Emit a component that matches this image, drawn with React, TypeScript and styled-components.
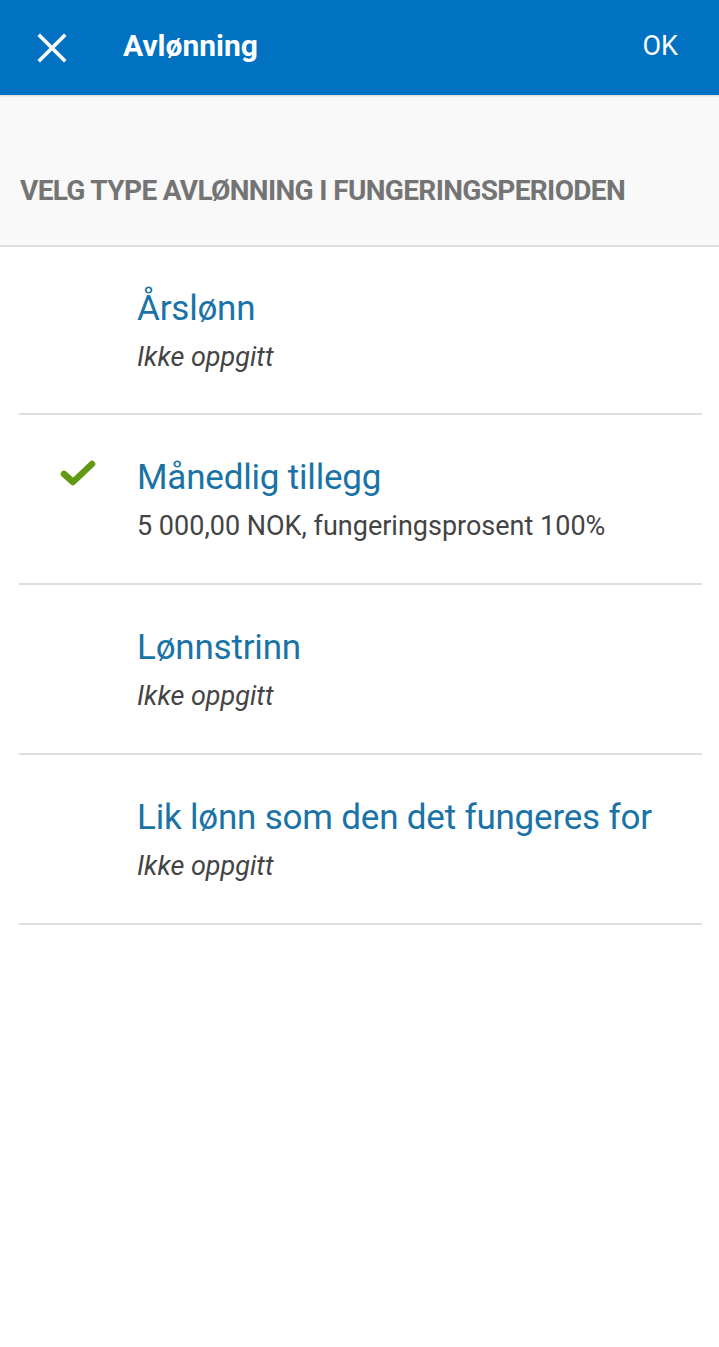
import React from "react";
import styled, { createGlobalStyle } from "styled-components";

const Global = createGlobalStyle`
  html, body { margin: 0; padding: 0; background: #ffffff; }
  body { font-family: Roboto, "Noto Sans", Arial, sans-serif; }
`;

const Page = styled.div`
  width: 719px;
  min-height: 1347px;
  background: #ffffff;
`;

const TopBar = styled.header`
  height: 95px;
  background: #0072c1;
  display: flex;
  align-items: center;
  padding: 0 41px 0 37px;
  box-sizing: border-box;
  box-shadow: 0 1px 2px rgba(0, 0, 0, 0.15);
  position: relative;
`;

const CloseButton = styled.button`
  width: 30px;
  height: 30px;
  padding: 0;
  border: 0;
  background: none;
  display: flex;
  align-items: center;
  justify-content: center;
  margin-right: 56px;
`;

const Title = styled.h1`
  flex: 1;
  margin: 0;
  color: #ffffff;
  font-family: Roboto, sans-serif;
  font-weight: 700;
  font-size: 30px;
  letter-spacing: 0;
  padding-bottom: 4px;
`;

const OkButton = styled.button`
  border: 0;
  background: none;
  color: #ffffff;
  font-family: Roboto, sans-serif;
  font-size: 27px;
  padding: 0 0 4px;
`;

const SectionHead = styled.div`
  background: #f9f9f9;
  height: 152px;
  border-bottom: 2px solid #dddddd;
  box-sizing: border-box;
  display: flex;
  align-items: flex-end;
  padding: 0 20px 38px;
`;

const SectionLabel = styled.h2`
  margin: 0;
  font-family: Roboto, sans-serif;
  font-weight: 700;
  font-size: 28px;
  line-height: 32px;
  color: #747474;
  text-transform: uppercase;
  letter-spacing: -0.65px;
  white-space: nowrap;
`;

const List = styled.ul`
  list-style: none;
  margin: 0;
  padding: 0 17px 0 19px;
`;

const Row = styled.li`
  height: 170px;
  border-bottom: 2px solid #dedede;
  display: flex;
  align-items: center;
  box-sizing: border-box;
  &:first-child {
    height: 168px;
  }
`;

const CheckSlot = styled.div`
  width: 118px;
  display: flex;
  justify-content: flex-start;
  padding-left: 41px;
  box-sizing: border-box;
  align-self: flex-start;
  margin-top: 44px;
`;

const Texts = styled.div`
  display: flex;
  flex-direction: column;
  gap: 13px;
`;

const OptionTitle = styled.div`
  font-family: Roboto, sans-serif;
  font-size: 35px;
  color: #1a73a6;
  line-height: 40px;
  letter-spacing: -0.2px;
  white-space: nowrap;
`;

const OptionSub = styled.div<{ $empty?: boolean }>`
  font-family: Roboto, sans-serif;
  font-size: 27px;
  color: #444444;
  font-style: ${(p) => (p.$empty ? "italic" : "normal")};
  line-height: 30px;
  letter-spacing: 0;
  white-space: nowrap;
`;

const items = [
  { title: "Årslønn", sub: "Ikke oppgitt", empty: true, checked: false },
  {
    title: "Månedlig tillegg",
    sub: "5 000,00 NOK, fungeringsprosent 100%",
    empty: false,
    checked: true,
  },
  { title: "Lønnstrinn", sub: "Ikke oppgitt", empty: true, checked: false },
  {
    title: "Lik lønn som den det fungeres for",
    sub: "Ikke oppgitt",
    empty: true,
    checked: false,
  },
];

export default function App() {
  return (
    <Page>
      <Global />
      <TopBar>
        <CloseButton aria-label="Lukk">
          <svg width="30" height="30" viewBox="0 0 30 30">
            <path
              d="M3 3 L27 27 M27 3 L3 27"
              stroke="#ffffff"
              strokeWidth="3.6"
              strokeLinecap="square"
            />
          </svg>
        </CloseButton>
        <Title>Avlønning</Title>
        <OkButton>OK</OkButton>
      </TopBar>
      <SectionHead>
        <SectionLabel>Velg type avlønning i fungeringsperioden</SectionLabel>
      </SectionHead>
      <List>
        {items.map((it) => (
          <Row key={it.title}>
            <CheckSlot>
              {it.checked && (
                <svg width="36" height="28" viewBox="0 0 36 28">
                  <path
                    d="M4 15 L13 23 L32 5"
                    fill="none"
                    stroke="#5f9a12"
                    strokeWidth="6.5"
                    strokeLinecap="round"
                    strokeLinejoin="round"
                  />
                </svg>
              )}
            </CheckSlot>
            <Texts>
              <OptionTitle>{it.title}</OptionTitle>
              <OptionSub $empty={it.empty}>{it.sub}</OptionSub>
            </Texts>
          </Row>
        ))}
      </List>
    </Page>
  );
}
